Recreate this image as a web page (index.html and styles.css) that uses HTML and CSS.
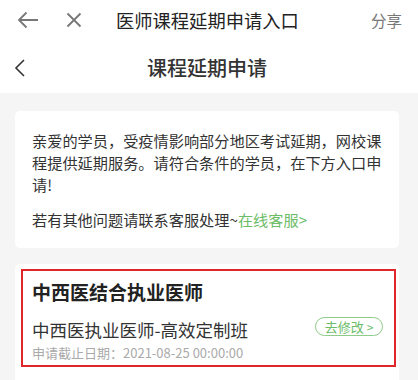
FILE: index.html
```html
<!DOCTYPE html>
<html lang="zh">
<head>
<meta charset="utf-8">
<link rel="stylesheet" href="styles.css">
</head>
<body>
<div class="topbar">
  <svg class="ic-back" width="22" height="18" viewBox="0 0 22 18"><path d="M21 9H2M9.5 1.5L2 9l7.5 7.5" fill="none" stroke="#777" stroke-width="1.8"/></svg>
  <svg class="ic-close" width="16" height="16" viewBox="0 0 16 16"><path d="M1.5 1.5l13 13M14.5 1.5l-13 13" fill="none" stroke="#777" stroke-width="1.8"/></svg>
  <div class="top-title">医师课程延期申请入口</div>
  <div class="share">分享</div>
</div>
<div class="navbar">
  <svg class="ic-lt" width="12" height="18" viewBox="0 0 12 18"><path d="M10 1L2 9l8 8" fill="none" stroke="#333" stroke-width="1.6"/></svg>
  <div class="nav-title">课程延期申请</div>
</div>
<div class="main">
  <div class="card notice">
    <p class="para">亲爱的学员，受疫情影响部分地区考试延期，网校课程提供延期服务。请符合条件的学员，在下方入口申请!</p>
    <p class="para tip">若有其他问题请联系客服处理~<span class="link">在线客服&gt;</span></p>
  </div>
  <div class="card course">
    <div class="hl">
      <div class="c-title">中西医结合执业医师</div>
      <div class="c-row">
        <div class="c-sub">中西医执业医师-高效定制班</div>
        <div class="btn">去修改 <span class="chev">&gt;</span></div>
      </div>
      <div class="c-date">申请截止日期：2021-08-25 00:00:00</div>
    </div>
  </div>
</div>
</body>
</html>
```
FILE: styles.css
```css
* { box-sizing: border-box; }
html, body { margin: 0; padding: 0; }
body {
  width: 418px;
  height: 380px;
  overflow: hidden;
  font-family: "Noto Sans CJK SC", "Noto Sans", sans-serif;
  color: #333;
  background: #f5f5f5;
}
.topbar {
  height: 40px;
  background: #fff;
  display: flex;
  align-items: center;
  padding-left: 17px;
  padding-right: 16px;
}
.ic-back { display: block; }
.ic-close { display: block; margin-left: 27px; }
.top-title {
  margin-left: 34px;
  font-size: 18.3px;
  color: #222;
  line-height: 24px;
}
.share {
  margin-left: auto;
  font-size: 15.5px;
  color: #777;
}
.navbar {
  height: 53px;
  background: #fff;
  display: flex;
  align-items: center;
  padding-left: 14px;
  padding-top: 2px;
}
.ic-lt { display: block; }
.nav-title {
  margin-left: 121px;
  font-size: 20px;
  font-weight: 500;
  color: #333;
}
.main {
  padding: 18px 19px 0 15px;
}
.card {
  background: #fff;
  border-radius: 5px;
}
.notice {
  padding: 18px 16px 18px 17px;
}
.para {
  margin: 0;
  font-size: 15.2px;
  line-height: 22px;
  color: #333;
}
.tip { margin-top: 13px; }
.link { color: #6dbd68; }
.course {
  margin-top: 16px;
  padding: 5px 3px 0 6px;
  border-radius: 5px 5px 0 0;
  height: 130px;
}
.hl {
  border: 2px solid #e0262a;
  padding: 8px 11px 0 9px;
  height: 98px;
}
.c-title {
  font-size: 19px;
  font-weight: 700;
  line-height: 26px;
  color: #222;
}
.c-row {
  margin-top: 12px;
  display: flex;
  align-items: center;
  justify-content: space-between;
  height: 26px;
}
.c-sub {
  font-size: 17.5px;
  line-height: 26px;
  color: #333;
}
.btn {
  height: 19px;
  width: 68px;
  border: 1px solid #8ecb8a;
  border-radius: 10px;
  color: #6dbd68;
  font-size: 13px;
  line-height: 17px;
  text-align: center;
  margin-top: -7px;
}
.chev { font-size: 12px; }
.c-date {
  margin-top: 1px;
  font-size: 13px;
  line-height: 18px;
  color: #aaa;
}
```
